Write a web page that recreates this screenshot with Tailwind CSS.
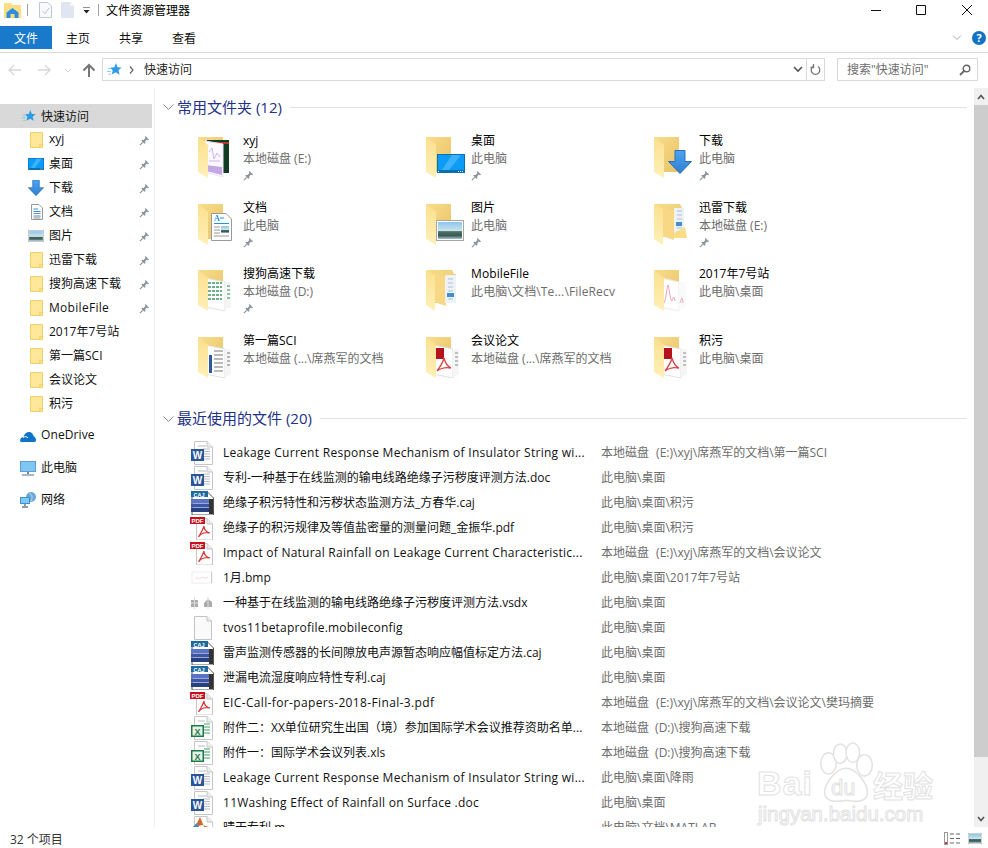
<!DOCTYPE html>
<html lang="zh"><head><meta charset="utf-8"><title>文件资源管理器</title>
<script src="https://cdn.jsdelivr.net/npm/@tailwindcss/browser@4"></script></head>
<body class="relative w-[988px] h-[848px] overflow-hidden bg-white text-[12px] text-[#111] [font-family:'Open_Sans','Noto_Sans_CJK_SC',sans-serif]">
<svg class="absolute w-0 h-0" aria-hidden="true">
<defs>
<linearGradient id="gb" x1="0" y1="0" x2="1" y2="1"><stop offset="0" stop-color="#f9dd8c"/><stop offset="1" stop-color="#e8c265"/></linearGradient>
<linearGradient id="gf" x1="0" y1="0" x2="0" y2="1"><stop offset="0" stop-color="#fbe08f"/><stop offset="1" stop-color="#fff0b8"/></linearGradient>
<linearGradient id="ga" x1="0" y1="0" x2="0" y2="1"><stop offset="0" stop-color="#4aa5ef"/><stop offset="1" stop-color="#2f7fd3"/></linearGradient>
<linearGradient id="gs" x1="0" y1="0" x2="0" y2="1"><stop offset="0" stop-color="#8cc5ea"/><stop offset="0.55" stop-color="#cfe6ee"/><stop offset="0.56" stop-color="#4f7560"/><stop offset="0.8" stop-color="#375a55"/><stop offset="1" stop-color="#a8c4d8"/></linearGradient>
</defs>
<symbol id="back" viewBox="0 0 40 44"><rect x="0" y="1" width="25" height="35" fill="url(#gb)"/></symbol>
<symbol id="flap" viewBox="0 0 40 44"><path d="M0 1 10 9V42L0 36Z" fill="url(#gf)"/></symbol>
<symbol id="pin" viewBox="0 0 12 12"><path d="M7 1 11 5 9.800 5.600 8.600 5 6.800 7.200 7 9 5.800 9.600 2.600 6.400 3.200 5.200 5 5.400 7 3.400 6.400 2.200Z" fill="#8a949c"/><path d="M4 8 1 11" stroke="#8a949c" stroke-width="1.300"/></symbol>
<symbol id="star" viewBox="0 0 16 16"><path d="M9.500 1 11.200 5.600 15.600 5.800 12.200 8.800 13.400 13.600 9.400 11 5 13.400 6.200 9 3.600 6 7.800 5.600Z" fill="#2c9be6"/><path d="M1 7H4M0 10H4M1.500 13H4" stroke="#7cc2ee" stroke-width="1"/></symbol>
<symbol id="sf" viewBox="0 0 14 17"><path d="M.5.5H13.500V16.500H.5Z" fill="#ffe89a" stroke="#eecb5a"/><path d="M10.500 16.500V13.500H13.500" fill="none" stroke="#eecb5a"/></symbol>
<symbol id="arrow" viewBox="0 0 24 24"><path d="M7 .5H17V11.500H23.500L12 23.500.5 11.500H7Z" fill="url(#ga)" stroke="#2a6eb8"/></symbol>
<symbol id="screen" viewBox="0 0 28 19"><rect width="28" height="19" fill="#0a6fb0"/><rect x="1" y="1" width="26" height="15" fill="#0c9bf5"/><path d="M15 1H24L12 16H5Z" fill="#3db2fa"/><path d="M1 17.500H3M21 17.500H27" stroke="#dff" stroke-width="1" stroke-dasharray="1 1"/></symbol>
<symbol id="pic" viewBox="0 0 28 21"><rect x=".5" y=".5" width="27" height="20" fill="#fff" stroke="#a6a6a6"/><rect x="2" y="2" width="24" height="17" fill="url(#gs)"/></symbol>
<symbol id="sdoc" viewBox="0 0 12 16"><path d="M.5.5H8L11.500 4V15.500H.5Z" fill="#fff" stroke="#9a9a9a"/><path d="M2.500 5H7M2.500 7.500H9.500M2.500 12H9.500" stroke="#2b8fd9"/><path d="M2.500 9.500H9.500M2.500 14H9.500" stroke="#8a8a8a"/></symbol>
<symbol id="page" viewBox="0 0 24 24"><path d="M4.500 .5H17L22.500 6V23.500H4.500Z" fill="#fff" stroke="#c6c6c6"/><path d="M17 .5V6H22.500" fill="#eee" stroke="#c6c6c6"/></symbol>
<symbol id="word" viewBox="0 0 24 24"><use href="#page"/><path d="M13 8H20M13 10.500H20M13 13H20M13 15.500H20M13 18H20M8 5H16" stroke="#b5bcc4"/><rect x="1" y="8" width="13" height="12" fill="#2a5699"/></symbol>
<symbol id="xls" viewBox="0 0 24 24"><use href="#page"/><path d="M14 8H20M14 11H20M14 14H20M14 17H20" stroke="#7fc09a" stroke-width="1.500"/><path d="M8 5H15" stroke="#b5bcc4"/><rect x="1" y="9" width="13" height="12" fill="#1f7a45"/><rect x="2.500" y="10.500" width="10" height="9" fill="#e4f2e8"/></symbol>
<symbol id="pdf" viewBox="0 0 24 24"><path d="M6.500 2.500H17L22.500 8V24H6.500Z" fill="#fff" stroke="#c6c6c6"/><path d="M17 2.500V8H22.500" fill="#e8e8e8" stroke="#c6c6c6"/><rect x="0" y="1" width="15" height="7" fill="#c8101c"/><path d="M14 10C13 14 10 18 8.500 21 11 17 16 16 20 17 16 16 14 13 14 10Z" fill="none" stroke="#d43b3b" stroke-width="1.200"/></symbol>
<symbol id="caj" viewBox="0 0 24 24"><path d="M2 .5H17L23.500 7V24H2Z" fill="#fff" stroke="#555"/><rect x="1" y="0" width="17" height="6" fill="#1d6a9c"/><rect x="1" y="8" width="18" height="4" fill="#5a73c4"/><rect x="1" y="12.500" width="18" height="4" fill="#3d55a8"/><rect x="1" y="17" width="18" height="4" fill="#27407f"/><rect x="19" y="8" width="4" height="15" fill="#333"/></symbol>
<symbol id="blank" viewBox="0 0 24 24"><path d="M4.500 .5H17L21.500 5V23.500H4.500Z" fill="#fafafa" stroke="#c4c4c4"/><path d="M17 .5V5H21.500" fill="#eee" stroke="#c4c4c4"/></symbol>
</svg>

<!-- title bar -->
<header class="flex items-center h-[20px] relative">
  <svg class="ml-[4px] w-[17px] h-[15px]" viewBox="0 0 17 15"><path d="M0 0H7L8 2H17V15H0Z" fill="#fbdd83"/><path d="M2.500 9.500 8.500 5 14.500 9.500V15H10.500V11H6.500V15H2.500Z" fill="#2f8ee0"/></svg>
  <span class="ml-[6px] w-px h-[12px] bg-[#a0a0a0]"></span>
  <svg class="ml-[11px] w-[13px] h-[16px]" viewBox="0 0 13 16"><path d="M.5.5H9L12.500 4V15.500H.5Z" fill="#f7f9fb" stroke="#bcc8d6"/><path d="M3.500 9 6 11.500 10 6" fill="none" stroke="#b3c4d6"/></svg>
  <svg class="ml-[9px] w-[13px] h-[16px]" viewBox="0 0 13 16"><path d="M0 0H9L13 4V16H0Z" fill="#dfe6f1"/><path d="M9 0V4H13" fill="#f2f5fa"/></svg>
  <svg class="ml-[8px] w-[9px] h-[7px]" viewBox="0 0 9 7"><path d="M1 0H8" stroke="#222"/><path d="M1.500 3H7.500L4.500 6.500Z" fill="#222"/></svg>
  <span class="ml-[7px] w-px h-[12px] bg-[#a0a0a0]"></span>
  <span class="ml-[7px] pt-[2px] text-black leading-[18px]">文件资源管理器</span>
  <div class="absolute right-0 top-0 w-[120px] h-[20px]">
    <svg class="absolute w-full h-full" viewBox="0 0 120 20"><path d="M3 10.500H13M48.500 5.500H57.500V14.500H48.500ZM94 5 104 15M104 5 94 15" fill="none" stroke="#111"/></svg>
  </div>
</header>

<!-- ribbon tabs -->
<nav class="flex h-[23px] mt-[6px] items-stretch relative">
  <span class="w-[52px] pt-[2px] bg-[#1979ca] text-white flex items-center justify-center">文件</span>
  <span class="ml-[14px] pt-[2px] flex items-center">主页</span>
  <span class="ml-[29px] pt-[2px] flex items-center">共享</span>
  <span class="ml-[29px] pt-[2px] flex items-center">查看</span>
  <svg class="absolute left-[952px] top-[9px] w-[10px] h-[6px]" viewBox="0 0 10 6"><path d="M1 .5 5 4.500 9 .5" fill="none" stroke="#a8a8a8"/></svg>
  <span class="absolute left-[972px] top-[5px] w-[14px] h-[14px] rounded-full bg-[#1272c4] text-white text-[11px] font-bold leading-[14px] text-center">?</span>
</nav>
<div class="h-px mt-[3px] bg-[#dadada]"></div>

<!-- address row -->
<div class="flex items-center h-[23px] mt-[5px] relative">
  <svg class="ml-[8px] w-[90px] h-[16px]" viewBox="0 0 90 16"><path d="M1 8H13M6 3 1 8 6 13M30 8H42M37 3 42 8 37 13" fill="none" stroke="#d6d6d6" stroke-width="1.300"/><path d="M57 7 60 10 63 7" fill="none" stroke="#d6d6d6"/><path d="M81 15V3M75.500 8.500 81 3 86.500 8.500" fill="none" stroke="#767676" stroke-width="2"/></svg>
  <div class="ml-[4px] w-[723px] h-[23px] border border-[#d9d9d9] flex items-center">
    <svg class="ml-[4px] w-[15px] h-[15px]"><use href="#star"/></svg>
    <svg class="ml-[7px] w-[5px] h-[8px]" viewBox="0 0 5 8"><path d="M1 .5 4 4 1 7.500" fill="none" stroke="#666" stroke-width="1.200"/></svg>
    <span class="ml-[10px] text-[#222]">快速访问</span>
    <svg class="ml-auto mr-[3px] w-[10px] h-[7px]" viewBox="0 0 10 7"><path d="M1 1 5 5 9 1" fill="none" stroke="#555" stroke-width="1.600"/></svg>
    <span class="w-px h-full bg-[#d9d9d9]"></span>
    <svg class="mx-[3px] w-[11px] h-[12px]" viewBox="0 0 11 12"><path d="M3 2.500A4.300 4.300 0 1 0 8 2.500M3.500 0V3.500H.5" fill="none" stroke="#777" stroke-width="1.300"/></svg>
  </div>
  <div class="ml-[12px] w-[141px] h-[23px] border border-[#d9d9d9] flex items-center">
    <span class="ml-[9px] text-[#6d6d6d]">搜索"快速访问"</span>
    <svg class="ml-auto mr-[6px] w-[12px] h-[12px]" viewBox="0 0 12 12"><circle cx="7.500" cy="4.500" r="3.300" fill="none" stroke="#666" stroke-width="1.400"/><path d="M5 7 1 11" stroke="#666" stroke-width="1.800"/></svg>
  </div>
</div>

<!-- body -->
<div class="flex h-[747px] mt-[7px] relative">
  <!-- sidebar -->
  <aside class="w-[155px] shrink-0 border-r border-[#f0f0f0] pt-[16px] text-[#111]">
    <div class="flex items-center h-[24px] w-[152px] bg-[#d9d9d9] pl-[22px] gap-[5px]"><svg class="w-[14px] h-[14px]"><use href="#star"/></svg><span class="pt-[2px]">快速访问</span></div>
    <ul>
      <li class="flex items-center h-[24px] pl-[30px]"><svg class="w-[13px] h-[16px]"><use href="#sf"/></svg><span class="ml-[6px] mt-[-2px]">xyj</span><svg class="ml-auto mr-[4px] w-[11px] h-[11px]"><use href="#pin"/></svg></li>
      <li class="flex items-center h-[24px] pl-[28px]"><svg class="w-[16px] h-[12px]" viewBox="0 0 28 19" preserveAspectRatio="none"><use href="#screen"/></svg><span class="ml-[5px]">桌面</span><svg class="ml-auto mr-[4px] w-[11px] h-[11px]"><use href="#pin"/></svg></li>
      <li class="flex items-center h-[24px] pl-[28px]"><svg class="w-[16px] h-[16px]"><use href="#arrow"/></svg><span class="ml-[5px]">下载</span><svg class="ml-auto mr-[4px] w-[11px] h-[11px]"><use href="#pin"/></svg></li>
      <li class="flex items-center h-[24px] pl-[31px]"><svg class="w-[12px] h-[16px]"><use href="#sdoc"/></svg><span class="ml-[6px]">文档</span><svg class="ml-auto mr-[4px] w-[11px] h-[11px]"><use href="#pin"/></svg></li>
      <li class="flex items-center h-[24px] pl-[28px]"><svg class="w-[16px] h-[12px]" viewBox="0 0 28 21" preserveAspectRatio="none"><use href="#pic"/></svg><span class="ml-[5px]">图片</span><svg class="ml-auto mr-[4px] w-[11px] h-[11px]"><use href="#pin"/></svg></li>
      <li class="flex items-center h-[24px] pl-[30px]"><svg class="w-[13px] h-[16px]"><use href="#sf"/></svg><span class="ml-[6px]">迅雷下载</span><svg class="ml-auto mr-[4px] w-[11px] h-[11px]"><use href="#pin"/></svg></li>
      <li class="flex items-center h-[24px] pl-[30px]"><svg class="w-[13px] h-[16px]"><use href="#sf"/></svg><span class="ml-[6px]">搜狗高速下载</span><svg class="ml-auto mr-[4px] w-[11px] h-[11px]"><use href="#pin"/></svg></li>
      <li class="flex items-center h-[24px] pl-[30px]"><svg class="w-[13px] h-[16px]"><use href="#sf"/></svg><span class="ml-[6px] tracking-[0.3px]">MobileFile</span><svg class="ml-auto mr-[4px] w-[11px] h-[11px]"><use href="#pin"/></svg></li>
      <li class="flex items-center h-[24px] pl-[30px]"><svg class="w-[13px] h-[16px]"><use href="#sf"/></svg><span class="ml-[6px]">2017年7号站</span></li>
      <li class="flex items-center h-[24px] pl-[30px]"><svg class="w-[13px] h-[16px]"><use href="#sf"/></svg><span class="ml-[6px]">第一篇SCI</span></li>
      <li class="flex items-center h-[24px] pl-[30px]"><svg class="w-[13px] h-[16px]"><use href="#sf"/></svg><span class="ml-[6px]">会议论文</span></li>
      <li class="flex items-center h-[24px] pl-[30px]"><svg class="w-[13px] h-[16px]"><use href="#sf"/></svg><span class="ml-[6px]">积污</span></li>
    </ul>
    <div class="flex items-center h-[24px] mt-[8px] pl-[20px] gap-[5px]"><svg class="w-[16px] h-[11px]" viewBox="0 0 16 11"><path d="M0 10C0 7 2 6 3.500 6 4 3 6.500 1 9 1 11.500 1 13 3 13.500 5 15 5.500 16 7.500 16 9 16 10 15.500 11 14.500 11H1Z" fill="#0f74c8"/><path d="M3 6.500C5 5 7 5.500 8 7" fill="none" stroke="#fff"/></svg><span class="mt-[-2px] tracking-[0.1px]">OneDrive</span></div>
    <div class="flex items-center h-[24px] mt-[8px] pl-[20px] gap-[5px]"><svg class="w-[16px] h-[15px]" viewBox="0 0 16 15"><rect width="16" height="11" fill="#5f9fd6"/><rect x="1" y="1" width="14" height="9" fill="#7fc6f4"/><path d="M7 11H9V13H7Z" fill="#7a8a98"/><path d="M2 14H14" stroke="#8aa0b2" stroke-width="1.500"/></svg><span>此电脑</span></div>
    <div class="flex items-center h-[24px] mt-[8px] pl-[20px] gap-[5px]"><svg class="w-[16px] h-[16px]" viewBox="0 0 16 16"><circle cx="11" cy="5" r="5" fill="#6aaad8"/><path d="M9 1C12 2 13 6 11 9" fill="none" stroke="#c8d4dc"/><rect x="0" y="5" width="10" height="7" fill="#3d8fd2"/><rect x="1" y="6" width="8" height="5" fill="#7cc8f4"/><path d="M5 12V14M2 15H8" stroke="#6a7a88" stroke-width="1.500"/></svg><span>网络</span></div>
  </aside>

  <!-- content -->
  <main class="flex-1 overflow-hidden h-[739px] pl-[7px]">
    <section>
      <div class="flex items-center h-[20px] mt-[9px]">
        <svg class="w-[11px] h-[6px] ml-[1px]" viewBox="0 0 11 6"><path d="M.5.5 5.500 5.500 10.500.5" fill="none" stroke="#8a8a8a"/></svg>
        <h2 class="ml-[3px] text-[15px] text-[#1e3287] font-normal">常用文件夹 (12)</h2>
        <span class="ml-[8px] mr-[7px] flex-1 h-px bg-[#e2e2e2]"></span>
      </div>
      <div class="grid grid-cols-[228px_228px_228px] auto-rows-[66.67px] pl-[36px] pt-[17px]">
        <div class="flex"><div class="relative w-[45px] h-[44px] mt-[2px]"><svg class="absolute w-[40px] h-[44px]"><use href="#back"/></svg><svg class="absolute left-[5px] top-[3px] w-[28px] h-[38px]" viewBox="0 0 28 38"><rect x="4" y="1" width="22" height="33" fill="#123d24"/><path d="M13 3H26V5H13Z" fill="#b5342c"/><path d="M2 2 20 5V38L2 33Z" fill="#fbf8fe" stroke="#ece4f6"/><path d="M6 13 9 9 11 20 14 14 17 18M6 22H17" fill="none" stroke="#cbb6ea"/><path d="M3 26 19 28V36L3 32Z" fill="#c4a8e6"/></svg><svg class="absolute w-[40px] h-[44px]"><use href="#flap"/></svg></div><div class="leading-[18px] mt-[-2px]"><p class="text-black">xyj</p><p class="text-[#6d6d6d]">本地磁盘 (E:)</p><svg class="w-[11px] h-[11px] mt-[2px]"><use href="#pin"/></svg></div></div>
        <div class="flex"><div class="relative w-[45px] h-[44px] mt-[2px]"><svg class="absolute w-[40px] h-[44px]"><use href="#back"/></svg><svg class="absolute w-[40px] h-[44px]"><use href="#flap"/></svg><svg class="absolute left-[11px] top-[18px] w-[28px] h-[19px]"><use href="#screen"/></svg></div><div class="leading-[18px] mt-[-2px]"><p class="text-black">桌面</p><p class="text-[#6d6d6d]">此电脑</p><svg class="w-[11px] h-[11px] mt-[2px]"><use href="#pin"/></svg></div></div>
        <div class="flex"><div class="relative w-[45px] h-[44px] mt-[2px]"><svg class="absolute w-[40px] h-[44px]"><use href="#back"/></svg><svg class="absolute w-[40px] h-[44px]"><use href="#flap"/></svg><svg class="absolute left-[14px] top-[14px] w-[24px] h-[24px]"><use href="#arrow"/></svg></div><div class="leading-[18px] mt-[-2px]"><p class="text-black">下载</p><p class="text-[#6d6d6d]">此电脑</p><svg class="w-[11px] h-[11px] mt-[2px]"><use href="#pin"/></svg></div></div>

        <div class="flex"><div class="relative w-[45px] h-[44px] mt-[2px]"><svg class="absolute w-[40px] h-[44px]"><use href="#back"/></svg><svg class="absolute w-[40px] h-[44px]"><use href="#flap"/></svg><svg class="absolute left-[13px] top-[10px] w-[21px] h-[28px]" viewBox="0 0 21 28"><path d="M.5.5H15L20.500 6V27.500H.5Z" fill="#fff" stroke="#9a9a9a"/><text x="3" y="8" font-size="8" font-weight="700" fill="#2b8fd9" font-family="Liberation Serif">A</text><path d="M9 5H13M3 10.500H18" stroke="#2b8fd9" stroke-width="1.200"/><path d="M3 14H9M3 17H9M3 20H9M3 23H18" stroke="#9a9a9a"/><rect x="10" y="13" width="8" height="7" fill="url(#gs)"/></svg></div><div class="leading-[18px] mt-[-2px]"><p class="text-black">文档</p><p class="text-[#6d6d6d]">此电脑</p><svg class="w-[11px] h-[11px] mt-[2px]"><use href="#pin"/></svg></div></div>
        <div class="flex"><div class="relative w-[45px] h-[44px] mt-[2px]"><svg class="absolute w-[40px] h-[44px]"><use href="#back"/></svg><svg class="absolute w-[40px] h-[44px]"><use href="#flap"/></svg><svg class="absolute left-[10px] top-[17px] w-[28px] h-[21px]"><use href="#pic"/></svg></div><div class="leading-[18px] mt-[-2px]"><p class="text-black">图片</p><p class="text-[#6d6d6d]">此电脑</p><svg class="w-[11px] h-[11px] mt-[2px]"><use href="#pin"/></svg></div></div>
        <div class="flex"><div class="relative w-[45px] h-[44px] mt-[2px]"><svg class="absolute w-[40px] h-[44px]" viewBox="0 0 40 44"><path d="M1 1H26L28 5H30V34L1 34Z" fill="url(#gb)"/><rect x="20" y="5" width="10" height="30" fill="#eef2f6"/><path d="M23 8H28M23 12H28M23 16H28M23 25H28M23 29H28" stroke="#a9c3d8"/><rect x="22" y="19" width="6" height="4" fill="#3d8fd2"/><path d="M31 24 33 35H20V30Z" fill="#fbdd85"/><path d="M8 4 20 8V37L8 33Z" fill="#f8d884"/><path d="M0 1 9 6V42L0 36Z" fill="url(#gf)"/></svg></div><div class="leading-[18px] mt-[-2px]"><p class="text-black">迅雷下载</p><p class="text-[#6d6d6d]">本地磁盘 (E:)</p><svg class="w-[11px] h-[11px] mt-[2px]"><use href="#pin"/></svg></div></div>

        <div class="flex"><div class="relative w-[45px] h-[44px] mt-[2px]"><svg class="absolute w-[40px] h-[44px]"><use href="#back"/></svg><svg class="absolute left-[7px] top-[8px] w-[26px] h-[34px]" viewBox="0 0 26 34"><path d="M0 1 20 5V34L0 30Z" fill="#fff" stroke="#e2e2e2"/><path d="M20 5H26V30L20 33Z" fill="#f5f5f5"/><path d="M3 6H17M3 10H17M3 14H17M3 18H17M3 22H17" stroke="#6fb08a" stroke-width="2" stroke-dasharray="3 1"/><path d="M22 9H25M22 13H25M22 17H25M22 21H25" stroke="#6fb08a" stroke-width="1.500"/></svg><svg class="absolute w-[40px] h-[44px]"><use href="#flap"/></svg></div><div class="leading-[18px] mt-[-2px]"><p class="text-black">搜狗高速下载</p><p class="text-[#6d6d6d]">本地磁盘 (D:)</p><svg class="w-[11px] h-[11px] mt-[2px]"><use href="#pin"/></svg></div></div>
        <div class="flex"><div class="relative w-[45px] h-[44px] mt-[2px]"><svg class="absolute w-[40px] h-[44px]" viewBox="0 0 40 44"><path d="M1 1H26L28 5H30V34L1 34Z" fill="url(#gb)"/><path d="M8 4 20 8V37L8 33Z" fill="#f8d884"/><path d="M0 1 9 6V42L0 36Z" fill="url(#gf)"/></svg><svg class="absolute left-[19px] top-[6px] w-[11px] h-[28px]" viewBox="0 0 11 28"><rect width="11" height="28" fill="#eef2f6"/><path d="M3 4H8M3 8H8M3 12H8M3 16H8M3 24H8" stroke="#a9c3d8"/><rect x="2" y="18" width="7" height="4" fill="#3d8fd2"/></svg></div><div class="leading-[18px] mt-[-2px]"><p class="text-black tracking-[0.1px]">MobileFile</p><p class="text-[#6d6d6d] tracking-[0.15px]">此电脑\文档\Te...\FileRecv</p></div></div>
        <div class="flex"><div class="relative w-[45px] h-[44px] mt-[2px]"><svg class="absolute w-[40px] h-[44px]"><use href="#back"/></svg><svg class="absolute left-[7px] top-[8px] w-[28px] h-[34px]" viewBox="0 0 28 34"><path d="M0 1 18 5V34L0 30Z" fill="#fff" stroke="#ececec"/><path d="M18 5H25V30L18 33Z" fill="#fafafa"/><path d="M3 26C5 24 6 8 7 8 8 8 9 24 11 24 12 20 13 18 14 24" fill="none" stroke="#e5a6b4"/><path d="M19 26C20 24 21 16 22 26" fill="none" stroke="#e5a6b4"/></svg><svg class="absolute w-[40px] h-[44px]"><use href="#flap"/></svg></div><div class="leading-[18px] mt-[-2px]"><p class="text-black">2017年7号站</p><p class="text-[#6d6d6d]">此电脑\桌面</p></div></div>

        <div class="flex"><div class="relative w-[45px] h-[44px] mt-[2px]"><svg class="absolute w-[40px] h-[44px]"><use href="#back"/></svg><svg class="absolute left-[7px] top-[8px] w-[26px] h-[34px]" viewBox="0 0 26 34"><path d="M0 1 20 5V34L0 30Z" fill="#fff" stroke="#e2e2e2"/><path d="M20 5H26V30L20 33Z" fill="#f5f5f5"/><path d="M9 7H18M9 11H18M9 15H18M9 19H18M9 23H18M9 27H18M22 9H25M22 13H25M22 17H25M22 21H25" stroke="#777"/><rect x="4" y="11" width="3" height="18" fill="#2b5a9e"/></svg><svg class="absolute w-[40px] h-[44px]"><use href="#flap"/></svg></div><div class="leading-[18px] mt-[-2px]"><p class="text-black">第一篇SCI</p><p class="text-[#6d6d6d]">本地磁盘 (...\席燕军的文档</p></div></div>
        <div class="flex"><div class="relative w-[45px] h-[44px] mt-[2px]"><svg class="absolute w-[40px] h-[44px]"><use href="#back"/></svg><svg class="absolute left-[7px] top-[8px] w-[26px] h-[34px]" viewBox="0 0 26 34"><path d="M0 1 20 5V34L0 30Z" fill="#fff" stroke="#e2e2e2"/><path d="M20 5H26V30L20 33Z" fill="#f5f5f5"/><path d="M22 9H25M22 13H25M22 17H25M22 21H25" stroke="#888"/><rect x="3" y="4" width="8" height="11" fill="#b5121b"/><path d="M11 14C10 19 7 23 4 27 8 24 13 23 18 24 14 22 12 18 11 14Z" fill="none" stroke="#d84848" stroke-width="1.300"/></svg><svg class="absolute w-[40px] h-[44px]"><use href="#flap"/></svg></div><div class="leading-[18px] mt-[-2px]"><p class="text-black">会议论文</p><p class="text-[#6d6d6d]">本地磁盘 (...\席燕军的文档</p></div></div>
        <div class="flex"><div class="relative w-[45px] h-[44px] mt-[2px]"><svg class="absolute w-[40px] h-[44px]"><use href="#back"/></svg><svg class="absolute left-[7px] top-[8px] w-[26px] h-[34px]" viewBox="0 0 26 34"><path d="M0 1 20 5V34L0 30Z" fill="#fff" stroke="#e2e2e2"/><path d="M20 5H26V30L20 33Z" fill="#f5f5f5"/><path d="M22 9H25M22 13H25M22 17H25M22 21H25" stroke="#888"/><rect x="3" y="4" width="8" height="11" fill="#b5121b"/><path d="M11 14C10 19 7 23 4 27 8 24 13 23 18 24 14 22 12 18 11 14Z" fill="none" stroke="#d84848" stroke-width="1.300"/></svg><svg class="absolute w-[40px] h-[44px]"><use href="#flap"/></svg></div><div class="leading-[18px] mt-[-2px]"><p class="text-black">积污</p><p class="text-[#6d6d6d]">此电脑\桌面</p></div></div>
      </div>
    </section>
    <section>
      <div class="flex items-center h-[20px] mt-[8px]">
        <svg class="w-[11px] h-[6px] ml-[1px]" viewBox="0 0 11 6"><path d="M.5.5 5.500 5.500 10.500.5" fill="none" stroke="#8a8a8a"/></svg>
        <h2 class="ml-[3px] text-[15px] text-[#1e3287] font-normal">最近使用的文件 (20)</h2>
        <span class="ml-[8px] mr-[7px] flex-1 h-px bg-[#e2e2e2]"></span>
      </div>
      <ul class="mt-[12px] pl-[28px]">
        <li class="flex items-center h-[25px]"><svg class="w-[24px] h-[24px] shrink-0" viewBox="0 0 24 24"><use href="#word"/><text x="7.500" y="18" font-size="10" font-weight="700" fill="#fff" text-anchor="middle" font-family="Liberation Sans">W</text></svg><span class="ml-[9px] w-[378px] shrink-0 whitespace-nowrap tracking-[0.28px]">Leakage Current Response Mechanism of Insulator String wi...</span><span class="text-[#6d6d6d] whitespace-nowrap [word-spacing:4px]">本地磁盘 (E:)\xyj\席燕军的文档\第一篇SCI</span></li>
        <li class="flex items-center h-[25px]"><svg class="w-[24px] h-[24px] shrink-0" viewBox="0 0 24 24"><use href="#word"/><text x="7.500" y="18" font-size="10" font-weight="700" fill="#fff" text-anchor="middle" font-family="Liberation Sans">W</text></svg><span class="ml-[9px] w-[378px] shrink-0 whitespace-nowrap">专利-一种基于在线监测的输电线路绝缘子污秽度评测方法.doc</span><span class="text-[#6d6d6d] whitespace-nowrap">此电脑\桌面</span></li>
        <li class="flex items-center h-[25px]"><svg class="w-[24px] h-[24px] shrink-0" viewBox="0 0 24 24"><use href="#caj"/><text x="9" y="5.500" font-size="5.500" font-weight="700" fill="#fff" text-anchor="middle" font-family="Liberation Sans">CAJ</text></svg><span class="ml-[9px] w-[378px] shrink-0 whitespace-nowrap">绝缘子积污特性和污秽状态监测方法_方春华.caj</span><span class="text-[#6d6d6d] whitespace-nowrap">此电脑\桌面\积污</span></li>
        <li class="flex items-center h-[25px]"><svg class="w-[24px] h-[24px] shrink-0" viewBox="0 0 24 24"><use href="#pdf"/><text x="7.500" y="7" font-size="6" font-weight="700" fill="#fff" text-anchor="middle" font-family="Liberation Sans">PDF</text></svg><span class="ml-[9px] w-[378px] shrink-0 whitespace-nowrap">绝缘子的积污规律及等值盐密量的测量问题_金振华.pdf</span><span class="text-[#6d6d6d] whitespace-nowrap">此电脑\桌面\积污</span></li>
        <li class="flex items-center h-[25px]"><svg class="w-[24px] h-[24px] shrink-0" viewBox="0 0 24 24"><use href="#pdf"/><text x="7.500" y="7" font-size="6" font-weight="700" fill="#fff" text-anchor="middle" font-family="Liberation Sans">PDF</text></svg><span class="ml-[9px] w-[378px] shrink-0 whitespace-nowrap tracking-[0.24px]">Impact of Natural Rainfall on Leakage Current Characteristic...</span><span class="text-[#6d6d6d] whitespace-nowrap [word-spacing:4px]">本地磁盘 (E:)\xyj\席燕军的文档\会议论文</span></li>
        <li class="flex items-center h-[25px]"><svg class="w-[24px] h-[24px] shrink-0" viewBox="0 0 24 24"><rect x="2" y="6" width="20" height="11" fill="#fff" stroke="#eee"/><path d="M5 13C7 10 9 14 11 12 13 10 15 14 18 11" fill="none" stroke="#f3d5dc"/><path d="M21.500 6V17" stroke="#ccc"/></svg><span class="ml-[9px] w-[378px] shrink-0 whitespace-nowrap">1月.bmp</span><span class="text-[#6d6d6d] whitespace-nowrap">此电脑\桌面\2017年7号站</span></li>
        <li class="flex items-center h-[25px]"><svg class="w-[24px] h-[24px] shrink-0" viewBox="0 0 24 24"><path d="M1 9H8V16H1ZM14 12 18 8 22 11V16H14Z" fill="#aaa"/><path d="M4.500 6V18M18 6V18M1 12H8" stroke="#ddd"/></svg><span class="ml-[9px] w-[378px] shrink-0 whitespace-nowrap">一种基于在线监测的输电线路绝缘子污秽度评测方法.vsdx</span><span class="text-[#6d6d6d] whitespace-nowrap">此电脑\桌面</span></li>
        <li class="flex items-center h-[25px]"><svg class="w-[24px] h-[24px] shrink-0"><use href="#blank"/></svg><span class="ml-[9px] w-[378px] shrink-0 whitespace-nowrap tracking-[0.2px]">tvos11betaprofile.mobileconfig</span><span class="text-[#6d6d6d] whitespace-nowrap">此电脑\桌面</span></li>
        <li class="flex items-center h-[25px]"><svg class="w-[24px] h-[24px] shrink-0" viewBox="0 0 24 24"><use href="#caj"/><text x="9" y="5.500" font-size="5.500" font-weight="700" fill="#fff" text-anchor="middle" font-family="Liberation Sans">CAJ</text></svg><span class="ml-[9px] w-[378px] shrink-0 whitespace-nowrap">雷声监测传感器的长间隙放电声源暂态响应幅值标定方法.caj</span><span class="text-[#6d6d6d] whitespace-nowrap">此电脑\桌面</span></li>
        <li class="flex items-center h-[25px]"><svg class="w-[24px] h-[24px] shrink-0" viewBox="0 0 24 24"><use href="#caj"/><text x="9" y="5.500" font-size="5.500" font-weight="700" fill="#fff" text-anchor="middle" font-family="Liberation Sans">CAJ</text></svg><span class="ml-[9px] w-[378px] shrink-0 whitespace-nowrap">泄漏电流湿度响应特性专利.caj</span><span class="text-[#6d6d6d] whitespace-nowrap">此电脑\桌面</span></li>
        <li class="flex items-center h-[25px]"><svg class="w-[24px] h-[24px] shrink-0" viewBox="0 0 24 24"><use href="#pdf"/><text x="7.500" y="7" font-size="6" font-weight="700" fill="#fff" text-anchor="middle" font-family="Liberation Sans">PDF</text></svg><span class="ml-[9px] w-[378px] shrink-0 whitespace-nowrap tracking-[0.36px]">EIC-Call-for-papers-2018-Final-3.pdf</span><span class="text-[#6d6d6d] whitespace-nowrap [word-spacing:4px]">本地磁盘 (E:)\xyj\席燕军的文档\会议论文\樊玛摘要</span></li>
        <li class="flex items-center h-[25px]"><svg class="w-[24px] h-[24px] shrink-0" viewBox="0 0 24 24"><use href="#xls"/><text x="7.500" y="18.500" font-size="9" font-weight="700" fill="#1f7a45" text-anchor="middle" font-family="Liberation Sans">X</text></svg><span class="ml-[9px] w-[378px] shrink-0 whitespace-nowrap">附件二：XX单位研究生出国（境）参加国际学术会议推荐资助名单...</span><span class="text-[#6d6d6d] whitespace-nowrap [word-spacing:3px]">本地磁盘 (D:)\搜狗高速下载</span></li>
        <li class="flex items-center h-[25px]"><svg class="w-[24px] h-[24px] shrink-0" viewBox="0 0 24 24"><use href="#xls"/><text x="7.500" y="18.500" font-size="9" font-weight="700" fill="#1f7a45" text-anchor="middle" font-family="Liberation Sans">X</text></svg><span class="ml-[9px] w-[378px] shrink-0 whitespace-nowrap">附件一：国际学术会议列表.xls</span><span class="text-[#6d6d6d] whitespace-nowrap [word-spacing:3px]">本地磁盘 (D:)\搜狗高速下载</span></li>
        <li class="flex items-center h-[25px]"><svg class="w-[24px] h-[24px] shrink-0" viewBox="0 0 24 24"><use href="#word"/><text x="7.500" y="18" font-size="10" font-weight="700" fill="#fff" text-anchor="middle" font-family="Liberation Sans">W</text></svg><span class="ml-[9px] w-[378px] shrink-0 whitespace-nowrap tracking-[0.28px]">Leakage Current Response Mechanism of Insulator String wi...</span><span class="text-[#6d6d6d] whitespace-nowrap">此电脑\桌面\降雨</span></li>
        <li class="flex items-center h-[25px]"><svg class="w-[24px] h-[24px] shrink-0" viewBox="0 0 24 24"><use href="#word"/><text x="7.500" y="18" font-size="10" font-weight="700" fill="#fff" text-anchor="middle" font-family="Liberation Sans">W</text></svg><span class="ml-[9px] w-[378px] shrink-0 whitespace-nowrap tracking-[0.27px]">11Washing Effect of Rainfall on Surface .doc</span><span class="text-[#6d6d6d] whitespace-nowrap">此电脑\桌面</span></li>
        <li class="flex items-center h-[25px]"><svg class="w-[24px] h-[24px] shrink-0" viewBox="0 0 24 24"><use href="#page"/><path d="M2 12 7 7 10 1 15 13 19 11 12 9Z" fill="#d2682c"/><path d="M2 12 7 7 9 11Z" fill="#3d8fd2"/></svg><span class="ml-[9px] w-[378px] shrink-0 whitespace-nowrap">晴天专利.m</span><span class="text-[#6d6d6d] whitespace-nowrap">此电脑\文档\MATLAB</span></li>
      </ul>
    </section>
  </main>

  <!-- scrollbar -->
  <div class="w-[14px] h-[739px] shrink-0 bg-[#f0f0f0] flex flex-col">
    <div class="h-[17px] flex items-center justify-center"><svg class="w-[8px] h-[6px]" viewBox="0 0 8 6"><path d="M1 5 4 1.500 7 5" fill="none" stroke="#555" stroke-width="1.600"/></svg></div>
    <div class="h-[652px] bg-[#cdcdcd]"></div>
    <div class="mt-auto h-[17px] flex items-center justify-center"><svg class="w-[8px] h-[6px]" viewBox="0 0 8 6"><path d="M1 1 4 4.500 7 1" fill="none" stroke="#555" stroke-width="1.600"/></svg></div>
  </div>
</div>

<!-- status bar (sits over the bottom of the body) -->
<footer class="absolute left-0 right-0 bottom-0 h-[20px] bg-white flex items-center">
  <span class="ml-[10px] pt-[3px] text-[#333]">32 个项目</span>
  <svg class="ml-auto w-[17px] h-[13px]" viewBox="0 0 17 13"><rect x=".5" y=".5" width="3" height="12" fill="#fff" stroke="#999"/><path d="M6 2H10M12 2H16M6 6.500H10M12 6.500H16M6 11H10M12 11H16" stroke="#666"/><rect x="1" y="10" width="2" height="2" fill="#c33"/></svg>
  <svg class="ml-[7px] mr-[6px] w-[14px] h-[11px]"  viewBox="0 0 28 21" preserveAspectRatio="none"><use href="#pic"/></svg>
</footer>

<!-- watermark overlay -->
<div class="absolute left-[755px] top-[740px] w-[185px] h-[90px] pointer-events-none">
  <svg class="absolute left-[60px] top-[2px] w-[65px] h-[68px]" viewBox="0 0 65 70"><g fill="#fff" stroke="#e2e2e2" stroke-width="1.500"><ellipse cx="13" cy="22" rx="8" ry="11"/><ellipse cx="25" cy="12" rx="7" ry="10"/><ellipse cx="38" cy="11" rx="7" ry="10"/><ellipse cx="50" cy="24" rx="8" ry="11"/><path d="M31 27C41 27 53 42 53 52 53 62 42 62 31 60 21 62 9 62 9 52 9 42 21 27 31 27Z"/></g></svg>
  <span class="absolute left-[2px] top-[26px] text-[34px] leading-[34px] font-bold tracking-[1px] text-white [-webkit-text-stroke:1px_#e2e2e2] [font-family:'Liberation_Sans',sans-serif]">Bai</span>
  <span class="absolute left-[76px] top-[37px] text-[22px] leading-[22px] text-white [-webkit-text-stroke:1px_#e2e2e2] [font-family:'Liberation_Sans',sans-serif]">du</span>
  <span class="absolute left-[118px] top-[28px] text-[30px] leading-[32px] font-bold text-white [-webkit-text-stroke:1px_#e2e2e2] [font-family:'Noto_Sans_CJK_SC',sans-serif]">经验</span>
  <span class="absolute left-[3px] top-[62px] text-[20.500px] leading-[24px] text-white [-webkit-text-stroke:1px_#e2e2e2] [font-family:'Liberation_Sans',sans-serif]">jingyan.baidu.com</span>
</div>
</body></html>
